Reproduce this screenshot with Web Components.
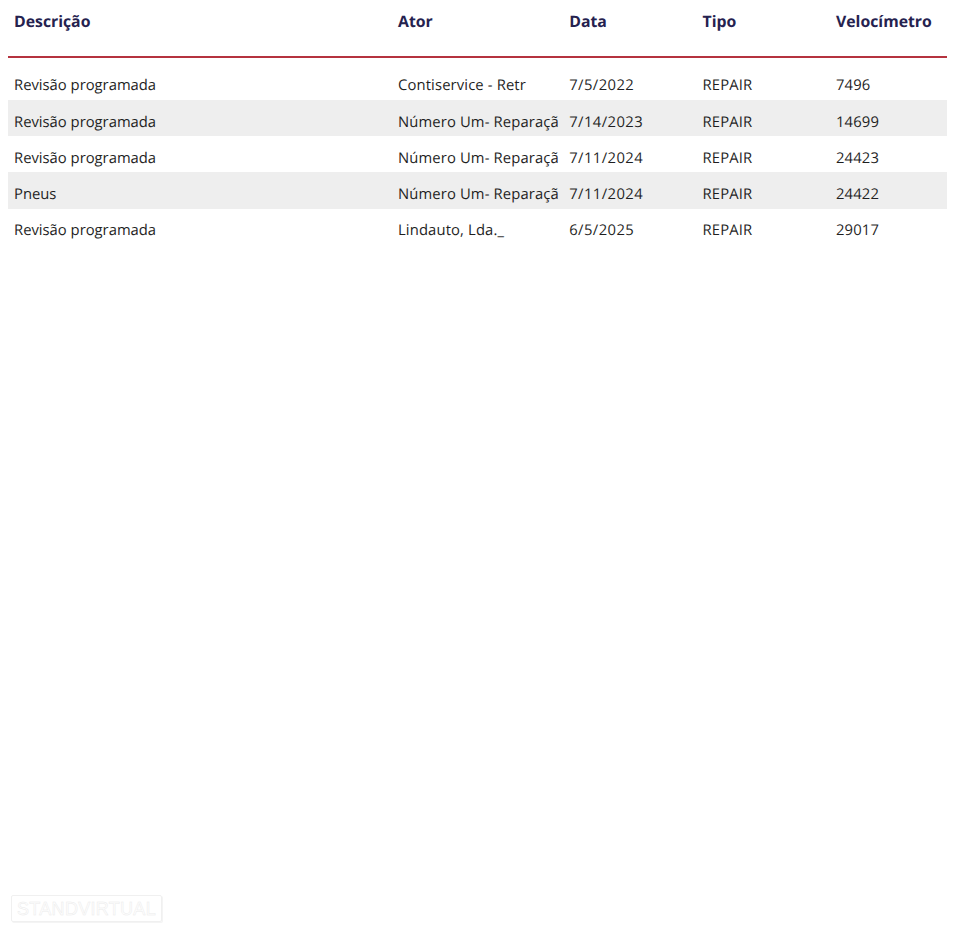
<!DOCTYPE html>
<html lang="pt">
<head>
<meta charset="utf-8">
<title>Histórico de manutenção</title>
<style>
  html, body { margin: 0; height: 100%; background: #fff; }
</style>
</head>
<body>
<service-table>
  <service-row heading cells="Descrição|Ator|Data|Tipo|Velocímetro"></service-row>
  <service-row cells="Revisão programada|Contiservice - Retr|7/5/2022|REPAIR|7496"></service-row>
  <service-row shaded cells="Revisão programada|Número Um- Reparaçã|7/14/2023|REPAIR|14699"></service-row>
  <service-row cells="Revisão programada|Número Um- Reparaçã|7/11/2024|REPAIR|24423"></service-row>
  <service-row shaded cells="Pneus|Número Um- Reparaçã|7/11/2024|REPAIR|24422"></service-row>
  <service-row cells="Revisão programada|Lindauto, Lda._|6/5/2025|REPAIR|29017"></service-row>
</service-table>
<wm-badge>STANDVIRTUAL</wm-badge>

<script>
class ServiceTable extends HTMLElement {
  constructor() {
    super();
    this.attachShadow({ mode: 'open' });
    this.shadowRoot.innerHTML = `
      <style>
        :host {
          display: block;
          width: 939px;
          padding-left: 8px;
        }
      </style>
      <slot></slot>
    `;
  }
}

class ServiceRow extends HTMLElement {
  constructor() {
    super();
    this.attachShadow({ mode: 'open' });
  }

  connectedCallback() {
    const cells = this.getAttribute('cells').split('|');
    this.shadowRoot.innerHTML = `
      <style>
        :host {
          display: grid;
          grid-template-columns: 384px 171.2px 133.3px 133.5px 1fr;
          align-items: center;
          box-sizing: border-box;
          height: 36.2px;
          padding: 6.9px 0 0 6px;
          font: 14.8px/20px "Open Sans", sans-serif;
          text-rendering: geometricPrecision;
          color: #1f1f1f;
        }
        :host([shaded]) { background: #eeeeee; }
        :host([heading]) {
          align-items: start;
          height: 58px;
          padding-top: 10px;
          margin-bottom: 5.8px;
          border-bottom: 2px solid #b5333f;
          font: 700 15.8px/22px "Open Sans", sans-serif;
          color: #25224f;
        }
        div { white-space: nowrap; }
        /* ajuste de largura por coluna */
        :host(:not([heading])) div:nth-of-type(2) { letter-spacing: 0.13px; }
        :host(:not([heading])) div:nth-of-type(3) { letter-spacing: 0.42px; }
        :host(:not([heading])) div:nth-of-type(4),
        :host(:not([heading])) div:nth-of-type(5) { letter-spacing: 0.15px; }
      </style>
      ${cells.map(c => `<div>${c}</div>`).join('')}
    `;
  }
}

class WmBadge extends HTMLElement {
  constructor() {
    super();
    this.attachShadow({ mode: 'open' });
    this.shadowRoot.innerHTML = `
      <style>
        :host {
          position: absolute;
          left: 11px;
          top: 895px;
          width: 151px;
          height: 27px;
          box-sizing: border-box;
          border: 1px solid #f0f0f0;
          border-radius: 2px;
          box-shadow: 1px 1px 0 #f4f4f4;
          display: flex;
          align-items: center;
          justify-content: center;
          font: 400 18px/1 "Liberation Sans", sans-serif;
          letter-spacing: 0.3px;
          color: #fff;
          -webkit-text-stroke: 0.5px #ebebeb;
          white-space: nowrap;
        }
      </style>
      <slot></slot>
    `;
  }
}

customElements.define('service-table', ServiceTable);
customElements.define('service-row', ServiceRow);
customElements.define('wm-badge', WmBadge);
</script>
</body>
</html>
